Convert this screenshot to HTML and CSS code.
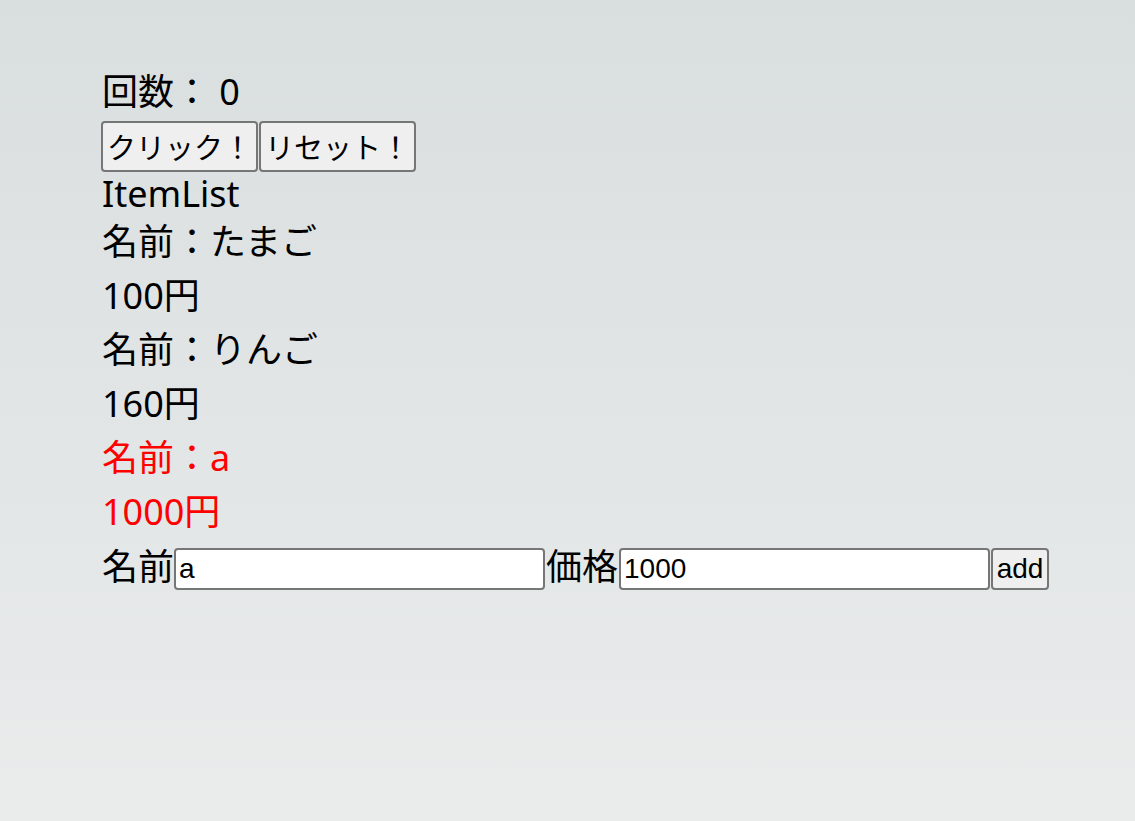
FILE: index.html
```html
<!DOCTYPE html>
<html lang="ja">
<head>
<meta charset="utf-8">
<title>App</title>
<link rel="stylesheet" href="styles.css">
</head>
<body>
<div class="app">
  <div class="count">回数： 0</div>
  <div class="btn-row"><button class="btn">クリック！</button><button class="btn">リセット！</button></div>
  <div class="title">ItemList</div>
  <div class="item">
    <div class="line">名前：たまご</div>
    <div class="line">100円</div>
  </div>
  <div class="item">
    <div class="line">名前：りんご</div>
    <div class="line">160円</div>
  </div>
  <div class="item item-new">
    <div class="line">名前：a</div>
    <div class="line">1000円</div>
  </div>
  <div class="form-row">
    <span class="label">名前</span><input class="field field-first" type="text" value="a"><span class="label label-second">価格</span><input class="field" type="text" value="1000"><button class="add">add</button>
  </div>
</div>
</body>
</html>
```

FILE: styles.css
```css
html, body {
  margin: 0;
  padding: 0;
}
body {
  min-height: 100vh;
  background: linear-gradient(to bottom, #d9dede 0%, #eaecec 100%);
  font-family: "Noto Sans", "Noto Sans CJK JP", sans-serif;
  font-size: 36px;
  color: #000;
}
.app {
  padding: 65px 0 0 102px;
}
.count {
  line-height: 54px;
  white-space: pre;
}
.btn-row {
  display: flex;
  margin: 2px 0 0 -2px;
}
.btn {
  margin: 0 0 0 1px;
  height: 51px;
  padding: 0 4px;
  border: 2px solid #767676;
  border-radius: 4px;
  background: #efefef;
  font-family: "Noto Sans CJK JP", sans-serif;
  font-size: 29px;
  line-height: 47px;
  color: #000;
}
.title {
  line-height: 40px;
  padding: 2px 0 1px;
}
.line {
  line-height: 54px;
}
.item-new {
  color: #ff0000;
}
.form-row {
  display: flex;
  align-items: flex-start;
  margin-top: 9px;
}
.label {
  line-height: 37px;
}
.label-second {
  margin-left: 1px;
}
.field {
  box-sizing: border-box;
  width: 371px;
  height: 42px;
  margin: 0 0 0 1px;
  padding: 0 3px;
  border: 2px solid #767676;
  border-radius: 4px;
  background: #fff;
  font-family: "Liberation Sans", Arial, sans-serif;
  font-size: 28px;
  color: #000;
}
.field-first {
  margin-left: 0;
}
.add {
  box-sizing: border-box;
  width: 58px;
  height: 42px;
  margin: 0 0 0 1px;
  padding: 0 2px;
  border: 2px solid #767676;
  border-radius: 4px;
  background: #efefef;
  font-family: "Liberation Sans", Arial, sans-serif;
  font-size: 28px;
  color: #000;
}
```
